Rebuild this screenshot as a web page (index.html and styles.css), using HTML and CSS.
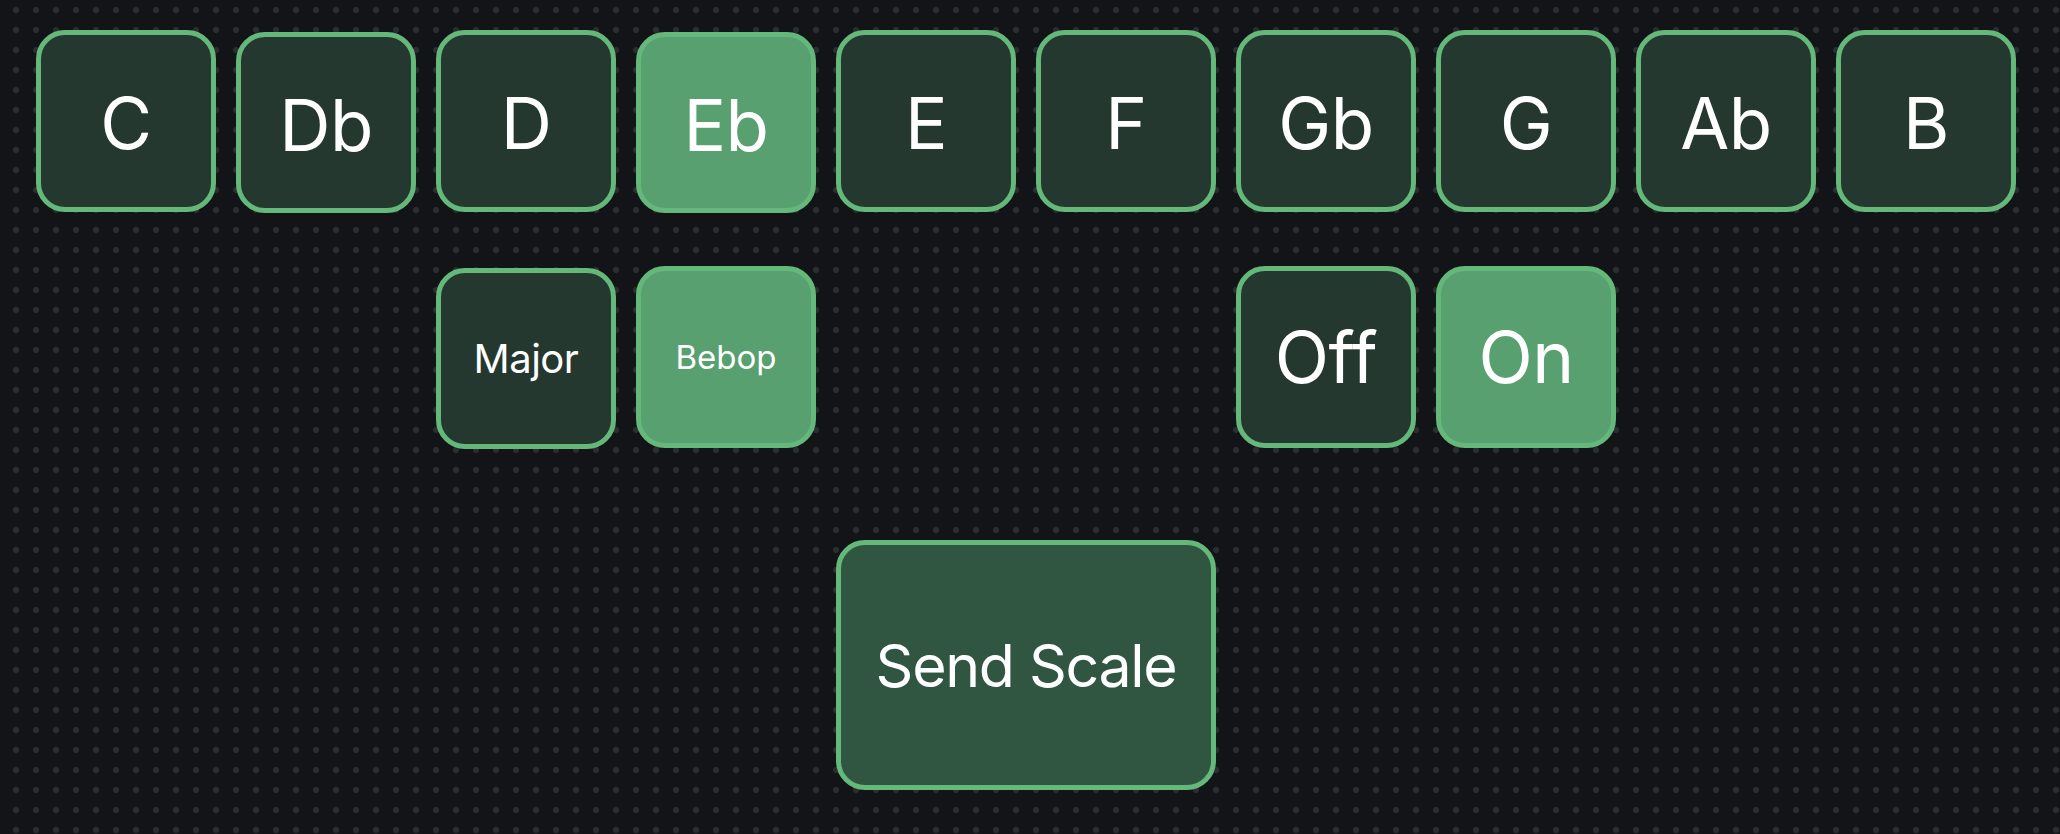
FILE: index.html
```html
<!DOCTYPE html>
<html lang="en">
<head>
<meta charset="utf-8">
<title>Scale Sender</title>
<link rel="stylesheet" href="styles.css">
</head>
<body>
<main class="board">
  <button class="pad note key">C</button>
  <button class="pad note key low">Db</button>
  <button class="pad note key">D</button>
  <button class="pad note key low active">Eb</button>
  <button class="pad note key">E</button>
  <button class="pad note key">F</button>
  <button class="pad note key">Gb</button>
  <button class="pad note key">G</button>
  <button class="pad note key">Ab</button>
  <button class="pad note key">B</button>

  <button class="pad mode col3 low">Major</button>
  <button class="pad mode small col4 active">Bebop</button>
  <button class="pad note col7">Off</button>
  <button class="pad note col8 active">On</button>

  <button class="pad send col5">Send Scale</button>
</main>
</body>
</html>
```

FILE: styles.css
```css
html, body {
  margin: 0;
  padding: 0;
  height: 100%;
}

body {
  background-color: #131417;
  background-image: radial-gradient(circle, #2c2d31 0, #2c2d31 2.7px, rgba(44,45,49,0) 3.3px);
  background-size: 20px 20px;
  background-position: 6px 0;
  font-family: Inter, "Noto Sans", "Liberation Sans", sans-serif;
  color: #ffffff;
}

.board {
  display: grid;
  grid-template-columns: repeat(10, 180px);
  grid-template-rows: 182px 182px 250px;
  column-gap: 20px;
  row-gap: 54px;
  padding: 30px 0 0 36px;
}

.pad {
  box-sizing: border-box;
  width: 180px;
  height: 182px;
  margin: 0;
  padding: 0;
  border: 5px solid #64b87a;
  border-radius: 29px;
  background: #243830;
  color: #ffffff;
  font-family: inherit;
  font-weight: 400;
  display: flex;
  align-items: center;
  justify-content: center;
  cursor: pointer;
}

.pad.active {
  background: #58a070;
}

.pad.low {
  margin-top: 2px;
  height: 181px;
}

.note {
  font-size: 71px;
  letter-spacing: -0.5px;
}

.key {
  padding-top: 4px;
}

.mode {
  font-size: 40px;
  letter-spacing: -0.5px;
}

.mode.small {
  font-size: 33px;
  letter-spacing: 0;
}

.col3 { grid-column: 3; grid-row: 2; }
.col4 { grid-column: 4; grid-row: 2; }
.col7 { grid-column: 7; grid-row: 2; }
.col8 { grid-column: 8; grid-row: 2; }

.send {
  grid-column: 5 / span 2;
  grid-row: 3;
  width: 380px;
  height: 250px;
  margin-top: 38px;
  background: #305540;
  font-size: 59px;
  letter-spacing: -1.3px;
}
```
